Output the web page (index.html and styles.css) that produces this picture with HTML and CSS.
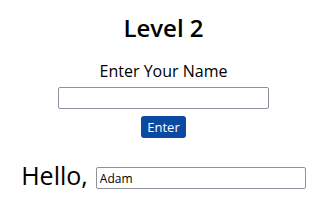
FILE: index.html
```html
<!DOCTYPE html>
<html lang="en">
<head>
    <meta charset="UTF-8">
    <meta name="viewport" content="width=device-width, initial-scale=1.0">
    <title>Level 2</title>
    <link rel="stylesheet" href="styles.css">
</head>
<body>
    <div class="level">
        <h1>Level 2</h1>

        <div class="name-form">
            <label for="nameInput">Enter Your Name</label>
            <input type="text" id="nameInput">
            <button id="enterButton">Enter</button>
        </div>

        <div class="greeting">
            <span class="hello">Hello,</span>
            <input type="text" id="nameOutput" value="Adam">
        </div>
    </div>
</body>
</html>
```

FILE: styles.css
```css
body {
    font-family: "Open Sans", sans-serif;
    margin: 0;
    padding: 0 10px 0 6px;
    background-color: white;
    color: black;
}

.level {
    display: flex;
    flex-direction: column;
    align-items: center;
}

h1 {
    font-size: 24px;
    font-weight: 600;
    margin: 12px 0 0;
    line-height: 32px;
}

.name-form {
    display: flex;
    flex-direction: column;
    align-items: center;
    margin-top: 16px;
}

label {
    font-size: 16px;
    line-height: 22px;
}

.name-form input {
    width: 211px;
    height: 22px;
    margin-top: 5px;
}

input {
    box-sizing: border-box;
    border: 1px solid #8f8f9d;
    border-radius: 2px;
    padding: 1px 3px;
    font-family: "Open Sans", sans-serif;
    font-size: 12px;
}

button {
    margin-top: 7px;
    height: 22px;
    padding: 0 6px;
    background-color: #0b4aa2;
    color: white;
    border: none;
    border-radius: 3px;
    font-family: "Open Sans", sans-serif;
    font-size: 13px;
}

.greeting {
    display: flex;
    align-items: center;
    gap: 8px;
    margin-top: 21px;
}

.hello {
    font-size: 25px;
    line-height: 32px;
}

.greeting input {
    width: 210px;
    height: 22px;
    margin-top: 6px;
}
```
